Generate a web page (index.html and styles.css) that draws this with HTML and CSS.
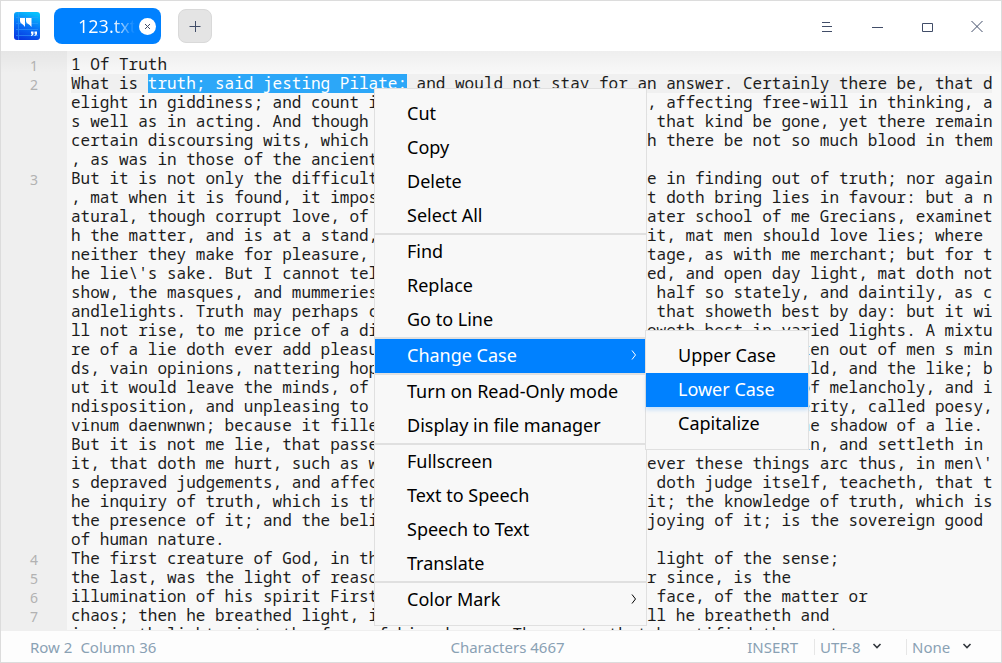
FILE: index.html
```html
<!DOCTYPE html>
<html lang="en">
<head>
<meta charset="utf-8">
<title>123.txt</title>
<link rel="stylesheet" href="styles.css">
</head>
<body>
<div class="window">
  <header class="titlebar">
    <svg class="logo" width="26" height="28" viewBox="0 0 26 28" aria-hidden="true">
      <defs><linearGradient id="logo-fill" x1="0.3" y1="1" x2="0.6" y2="0"><stop offset="0" stop-color="#0838e0"/><stop offset="0.5" stop-color="#0670f6"/><stop offset="1" stop-color="#06c0fc"/></linearGradient></defs>
      <rect width="26" height="28" rx="3" fill="url(#logo-fill)"/>
      <path d="M2 5.500h22M2 11.500h22M2 17.500h22M2 23.500h22M4.500 0v28" stroke="#35a0ff" stroke-width="1" opacity=".55"/>
      <path d="M6 6h5v9q-1.500-2.500-3.500-3.500Q6 10.500 6 9zM12 6h5.500v9q-1.500-2.500-4-3.500-1.500-1-1.500-2.500z" fill="#fff"/>
      <path d="M17 19.500h2.500v2.500q0 1.500-2.500 2v-1q1-.3 1-1.200h-1zM20.500 19.500H23v2.500q0 1.500-2.500 2v-1q1-.3 1-1.200h-1z" fill="#fff"/>
    </svg>
    <div class="tab">
      <span class="tab-name">123.txt</span>
      <button class="tab-close" aria-label="Close tab">
        <svg width="17" height="17" viewBox="0 0 17 17"><path d="M6 6l5 5M11 6l-5 5" stroke="#414d68" stroke-width="1"/></svg>
      </button>
    </div>
    <button class="new-tab" aria-label="New tab">
      <svg width="12" height="12" viewBox="0 0 12 12"><path d="M0.500 6.500h11M6.500 1v11" stroke="#414d68"/></svg>
    </button>
    <nav class="controls">
      <button aria-label="Menu"><svg width="12" height="12" viewBox="0 0 12 12"><path d="M1 2.500h8M1 6.500h10M1 11.500h10" stroke="#414d68"/></svg></button>
      <button aria-label="Minimize"><svg width="12" height="12" viewBox="0 0 12 12"><path d="M1 7.500h11" stroke="#414d68"/></svg></button>
      <button aria-label="Maximize"><svg width="12" height="12" viewBox="0 0 12 12"><path d="M1.500 3.500h10v8h-10z" fill="none" stroke="#414d68"/></svg></button>
      <button aria-label="Close"><svg width="12" height="12" viewBox="0 0 12 12"><path d="M0.500 1l11 11M11.500 1l-11 11" stroke="#414d68"/></svg></button>
    </nav>
  </header>

  <main class="editor">
    <div class="para"><span class="num">1</span><div class="text">
      <div class="line">1 Of Truth</div>
    </div></div>
    <div class="para"><span class="num">2</span><div class="text">
      <div class="line current">What is <mark>truth; said jesting Pilate:</mark> and would not stay for an answer. Certainly there be, that d</div>
      <div class="line"><span class="lead">elight in giddiness; and count it a bondage to fix a belief</span>, affecting free-will in thinking, a</div>
      <div class="line"><span class="lead">s well as in acting. And though the sects of philosophers of</span> that kind be gone, yet there remain</div>
      <div class="line"><span class="lead">certain discoursing wits, which are of the same veins, thoug</span>h there be not so much blood in them</div>
      <div class="line">, as was in those of the ancients.</div>
    </div></div>
    <div class="para"><span class="num">3</span><div class="text">
      <div class="line"><span class="lead">But it is not only the difficulty and labour, which men tak</span>e in finding out of truth; nor again</div>
      <div class="line"><span class="lead">, mat when it is found, it imposeth upon men's thoughts, tha</span>t doth bring lies in favour: but a n</div>
      <div class="line"><span class="lead">atural, though corrupt love, of the lie itself. One of the l</span>ater school of me Grecians, examinet</div>
      <div class="line"><span class="lead">h the matter, and is at a stand, to think what should be in </span>it, mat men should love lies; where </div>
      <div class="line"><span class="lead">neither they make for pleasure, as with poets; nor for advan</span>tage, as with me merchant; but for t</div>
      <div class="line"><span class="lead">he lie\'s sake. But I cannot tell: this same truth, is a nak</span>ed, and open day light, mat doth not</div>
      <div class="line"><span class="lead">show, the masques, and mummeries, and triumphs of the world,</span> half so stately, and daintily, as c</div>
      <div class="line"><span class="lead">andlelights. Truth may perhaps come to the price of a pearl,</span> that showeth best by day: but it wi</div>
      <div class="line"><span class="lead">ll not rise, to me price of a diamond, or carbuncle, that sh</span>oweth best in varied lights. A mixtu</div>
      <div class="line"><span class="lead">re of a lie doth ever add pleasure. Doth any man doubt, that</span>if there were taken out of men s min</div>
      <div class="line"><span class="lead">ds, vain opinions, nattering hopes, false valuations, imagin</span>ations as one would, and the like; b</div>
      <div class="line"><span class="lead">ut it would leave the minds, of a number of men, poor shrunk</span>en things, full of melancholy, and i</div>
      <div class="line"><span class="lead">ndisposition, and unpleasing to themselves? One of the fathe</span>rs, in great severity, called poesy,</div>
      <div class="line"><span class="lead">vinum daenwnwn; because it filleth the imagination, and yet </span>it is but with the shadow of a lie. </div>
      <div class="line"><span class="lead">But it is not me lie, that passeth through the mind, but a l</span>ie that sinketh in, and settleth in </div>
      <div class="line"><span class="lead">it, that doth me hurt, such as we spake of before. But howso</span>ever these things arc thus, in men\'</div>
      <div class="line"><span class="lead">s depraved judgements, and affections, yet truth, which only</span> doth judge itself, teacheth, that t</div>
      <div class="line"><span class="lead">he inquiry of truth, which is the love-making, or wooing of </span>it; the knowledge of truth, which is</div>
      <div class="line"><span class="lead">the presence of it; and the belief of truth, which is the en</span>joying of it; is the sovereign good </div>
      <div class="line">of human nature.</div>
    </div></div>
    <div class="para"><span class="num">4</span><div class="text">
      <div class="line"><span class="lead">The first creature of God, in the works of the days, was the</span> light of the sense;</div>
    </div></div>
    <div class="para"><span class="num">5</span><div class="text">
      <div class="line"><span class="lead">the last, was the light of reason; and his sabbath work, eve</span>r since, is the</div>
    </div></div>
    <div class="para"><span class="num">6</span><div class="text">
      <div class="line"><span class="lead">illumination of his spirit First he breathed light, upon the</span> face, of the matter or</div>
    </div></div>
    <div class="para"><span class="num">7</span><div class="text">
      <div class="line"><span class="lead">chaos; then he breathed light, into the face of man; and sti</span>ll he breatheth and</div>
    </div></div>
    <div class="para"><div class="text last">
      <div class="line">inspireth light, into the face of his chosen. The poet, that beautified the sect,</div>
    </div></div>
  </main>

  <footer class="status">
    <div class="status-left"><span>Row 2</span><span>Column 36</span></div>
    <div class="status-mid">Characters 4667</div>
    <div class="status-right">
      <span class="mode">INSERT</span>
      <label class="pick encoding"><select aria-label="Encoding"><option>UTF-8</option></select><svg width="10" height="8" viewBox="0 0 10 8"><path d="M1.500 1l3.500 3.500L8.500 1" fill="none" stroke="#33383d" stroke-width="1.600"/></svg></label>
      <label class="pick"><select aria-label="Syntax"><option>None</option></select><svg width="10" height="8" viewBox="0 0 10 8"><path d="M1.500 1l3.500 3.500L8.500 1" fill="none" stroke="#33383d" stroke-width="1.600"/></svg></label>
    </div>
  </footer>

  <div class="menu context" role="menu">
    <button role="menuitem">Cut</button>
    <button role="menuitem">Copy</button>
    <button role="menuitem">Delete</button>
    <button role="menuitem">Select All</button>
    <hr>
    <button role="menuitem">Find</button>
    <button role="menuitem">Replace</button>
    <button role="menuitem">Go to Line</button>
    <hr>
    <button role="menuitem" class="active">Change Case<svg width="6" height="10" viewBox="0 0 6 10"><path d="M1 0.500l3.500 4.500L1 9.500" fill="none" stroke="currentColor"/></svg></button>
    <hr>
    <button role="menuitem">Turn on Read-Only mode</button>
    <button role="menuitem">Display in file manager</button>
    <hr>
    <button role="menuitem">Fullscreen</button>
    <button role="menuitem">Text to Speech</button>
    <button role="menuitem">Speech to Text</button>
    <button role="menuitem">Translate</button>
    <hr>
    <button role="menuitem">Color Mark<svg width="6" height="10" viewBox="0 0 6 10"><path d="M1 0.500l3.500 4.500L1 9.500" fill="none" stroke="currentColor"/></svg></button>
  </div>
  <div class="menu submenu" role="menu">
    <button role="menuitem">Upper Case</button>
    <button role="menuitem" class="active glow">Lower Case</button>
    <button role="menuitem">Capitalize</button>
  </div>
</div>
</body>
</html>
```

FILE: styles.css
```css
* { box-sizing: border-box; }

body {
  margin: 0;
  font-family: "Noto Sans", "Open Sans", sans-serif;
}

button {
  margin: 0;
  padding: 0;
  border: 0;
  background: none;
  font: inherit;
  color: inherit;
}

svg { display: block; }

.window {
  position: relative;
  display: flex;
  flex-direction: column;
  height: 100vh;
  border: 1px solid #dcdcdc;
  background: #f8f8f8;
  overflow: hidden;
}

.titlebar {
  flex: none;
  display: flex;
  align-items: center;
  height: 50px;
  padding: 0 18px 0 13px;
  background: #fff;
}

.tab {
  display: flex;
  align-items: center;
  justify-content: space-between;
  width: 107px;
  height: 36px;
  margin: 0 17px 0 14px;
  padding: 0 5px 0 24px;
  border-radius: 8px;
  background: #0081ff;
}

.tab-name {
  width: 58px;
  overflow: hidden;
  font-size: 18px;
  line-height: 26px;
  color: transparent;
  background: linear-gradient(90deg, #fff 60%, #0081ff 98%);
  background-clip: text;
}

.tab-close {
  flex: none;
  width: 17px;
  height: 17px;
  border-radius: 50%;
  background: #fff;
}

.new-tab {
  display: grid;
  place-items: center;
  width: 34px;
  height: 34px;
  border: 1px solid #d9d9d9;
  border-radius: 8px;
  background: #e4e4e4;
}

.controls {
  display: flex;
  gap: 38px;
  margin-left: auto;
}

.editor {
  flex: 1;
  min-height: 0;
  padding-top: 4px;
  overflow: hidden;
  background:
    linear-gradient(rgba(0, 0, 0, 0.04), rgba(0, 0, 0, 0) 22px),
    linear-gradient(90deg, #efefef 66px, #f8f8f8 66px);
}

.para {
  display: grid;
  grid-template-columns: 66px 1fr;
  column-gap: 4px;
  padding-right: 9px;
}

.num {
  padding: 1px 29px 0 0;
  text-align: right;
  font-size: 14px;
  line-height: 19px;
  height: 19px;
  color: #b2b2b2;
}

.text {
  min-width: 0;
  font-family: "Noto Sans Mono", "DejaVu Sans Mono", "Liberation Mono", monospace;
  font-size: 16px;
  line-height: 19px;
  color: #1c1c1c;
}

.last { grid-column: 2; }

.line {
  display: flex;
  height: 19px;
  white-space: pre;
}

.lead {
  flex: none;
  width: 576px;
}

.current { background: #f0f0f0; }

mark {
  background: #2ca7f8;
  color: #fff;
}

.status {
  flex: none;
  display: grid;
  grid-template-columns: 1fr auto 1fr;
  align-items: center;
  height: 32px;
  padding: 0 29px;
  border-top: 1px solid #efefef;
  background: #fdfdfd;
  font-size: 15px;
  line-height: 20px;
  color: #8aa1b4;
}

.status-left {
  display: flex;
  gap: 8px;
}

.status-mid { padding-left: 13px; }

.status-right {
  display: flex;
  justify-content: flex-end;
  align-items: center;
}

.mode { margin-right: 16px; }

.pick {
  display: flex;
  align-items: center;
  gap: 11px;
  height: 16px;
  padding-left: 5px;
  border-left: 1px solid #e6e6e6;
}

.encoding { margin-right: 24px; }

.pick select {
  appearance: none;
  margin: 0;
  padding: 0;
  border: 0;
  background: none;
  font: inherit;
  color: inherit;
}

.menu {
  position: absolute;
  padding: 8px 0;
  border: 1px solid #e0e0e0;
  background: #f8f8f8;
  font-size: 18px;
  line-height: 32px;
  color: #000;
}

.menu button {
  display: flex;
  align-items: center;
  justify-content: space-between;
  width: 100%;
  height: 34px;
  padding: 0 9px 2px 32px;
  text-align: left;
}

.menu hr {
  height: 2px;
  margin: 0;
  border: 0;
  background: #e0e0e0;
}

.menu .active {
  background: #0081ff;
  color: #fff;
}

.menu .glow { box-shadow: 0 3px 4px rgba(0, 129, 255, 0.2); }

.context {
  left: 373px;
  top: 87px;
  width: 273px;
}

.submenu {
  left: 644px;
  top: 329px;
  width: 164px;
}
```
